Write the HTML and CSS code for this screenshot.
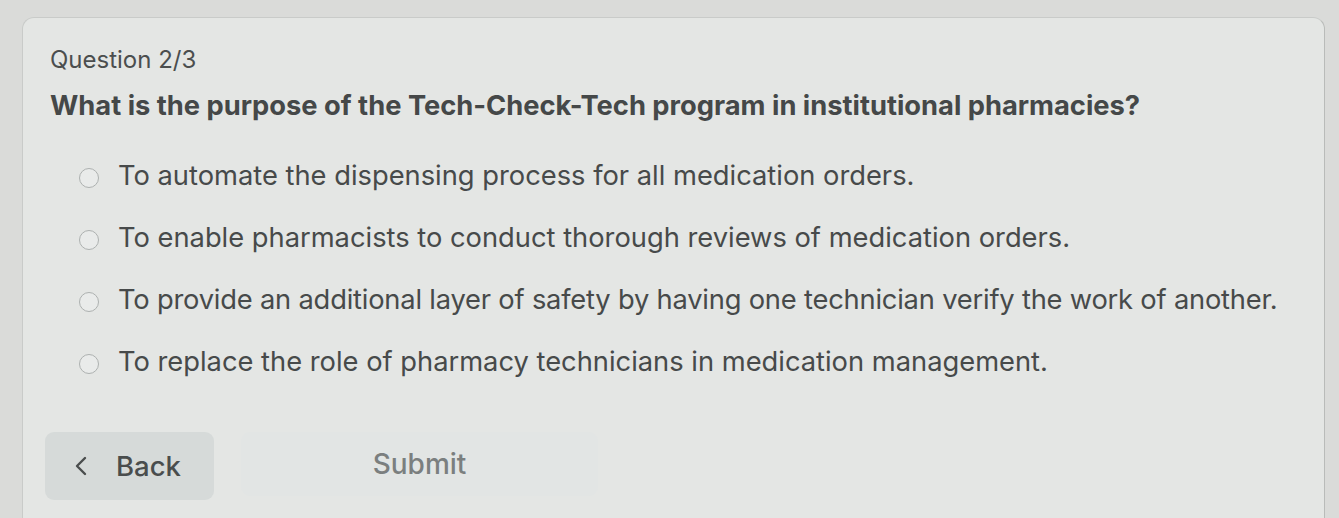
FILE: index.html
```html
<!DOCTYPE html>
<html lang="en">
<head>
<meta charset="utf-8">
<title>Question 2/3</title>
<link rel="stylesheet" href="styles.css">
</head>
<body>
<div class="page">
  <div class="card">
    <div class="counter">Question 2/3</div>
    <div class="question">What is the purpose of the Tech-Check-Tech program in institutional pharmacies?</div>
    <div class="options">
      <label class="option"><span class="radio"></span><span class="opt-text">To automate the dispensing process for all medication orders.</span></label>
      <label class="option"><span class="radio"></span><span class="opt-text">To enable pharmacists to conduct thorough reviews of medication orders.</span></label>
      <label class="option"><span class="radio"></span><span class="opt-text tight">To provide an additional layer of safety by having one technician verify the work of another.</span></label>
      <label class="option"><span class="radio"></span><span class="opt-text">To replace the role of pharmacy technicians in medication management.</span></label>
    </div>
    <div class="actions">
      <button class="btn back"><svg class="chev" viewBox="0 0 12 20" width="12" height="20"><path d="M10 2 L2 10 L10 18" fill="none" stroke="#4a4d4d" stroke-width="2.4" stroke-linecap="round" stroke-linejoin="round"/></svg><span>Back</span></button>
      <button class="btn submit">Submit</button>
    </div>
  </div>
</div>
</body>
</html>
```
FILE: styles.css
```css
html, body {
  margin: 0;
  padding: 0;
}
body {
  background: #dadbd9;
  font-family: Inter, "Noto Sans", sans-serif;
  color: #474a4a;
  width: 1339px;
  height: 518px;
  overflow: hidden;
}
.page {
  padding: 17px 14px 0 22px;
}
.card {
  background: #e4e6e4;
  border: 1px solid #c9cbc9;
  border-right-color: #b9bbb9;
  border-radius: 12px 12px 0 0;
  height: 520px;
  padding: 27px 0 0 27px;
  box-sizing: border-box;
}
.counter {
  font-size: 24px;
  font-weight: 400;
  color: #4b4e4e;
  line-height: 30px;
}
.question {
  margin-top: 14px;
  font-size: 27.3px;
  font-weight: 700;
  line-height: 34px;
  color: #454848;
}
.options {
  margin-top: 35px;
  display: flex;
  flex-direction: column;
  gap: 26px;
  padding-left: 30px;
}
.option {
  display: flex;
  align-items: center;
  gap: 19px;
  height: 36px;
}
.radio {
  width: 18px;
  height: 18px;
  border: 1.5px solid #adb1b0;
  border-radius: 50%;
  background: #e9ebea;
  flex: none;
  margin-top: 3px;
  margin-left: -1px;
}
.opt-text {
  font-size: 27.3px;
  line-height: 36px;
  color: #474a4a;
}
.opt-text.tight {
  letter-spacing: -0.2px;
}
.actions {
  margin-top: 52px;
  display: flex;
  gap: 27px;
  margin-left: -5px;
}
.btn {
  font-family: inherit;
  border: none;
  border-radius: 9px;
  height: 68px;
  font-weight: 500;
}
.back {
  width: 169px;
  background: #d6dad9;
  color: #4a4d4d;
  display: flex;
  align-items: center;
  padding: 0 0 0 30px;
  gap: 29px;
  font-size: 27.5px;
}
.submit {
  width: 357px;
  background: #e2e5e4;
  color: #7b7f7f;
  height: 64px;
  padding-bottom: 2px;
  font-size: 28px;
}
```
